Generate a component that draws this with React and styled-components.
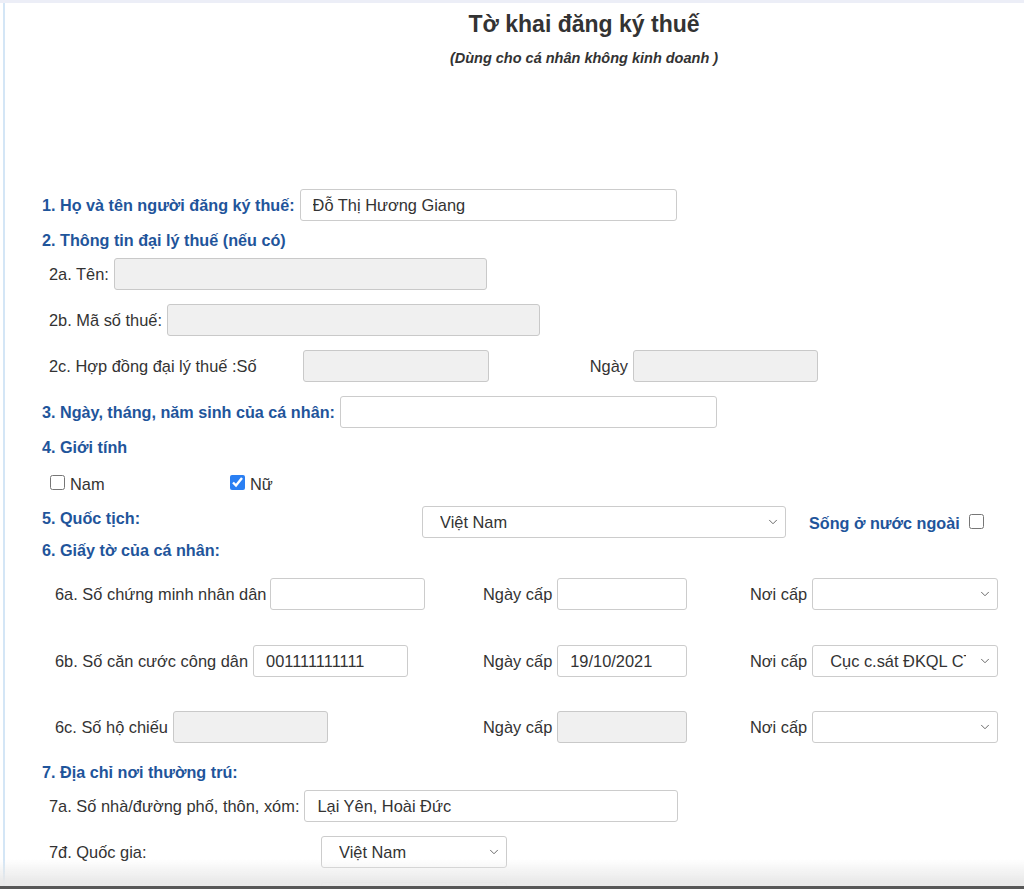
import styled, { createGlobalStyle } from "styled-components";
import { ChevronDown } from "lucide-react";

const GlobalStyle = createGlobalStyle`
  html, body { margin: 0; padding: 0; background: #fff; }
  body {
    font-family: "Liberation Sans", Arial, sans-serif;
    color: #333;
    overflow: hidden;
  }
  * { box-sizing: border-box; }
`;

const Page = styled.div`
  border-top: 3px solid #eceef7;
  height: 889px;
  overflow: hidden;
`;

const Frame = styled.div`
  margin-left: 3px;
  border-left: 2px solid #d4e6f6;
  min-height: 960px;
`;

const Header = styled.div`
  padding: 6px 0 0 139px;
  text-align: center;
`;

const Title = styled.h1`
  margin: 0;
  font-size: 23px;
  line-height: 30px;
  font-weight: 700;
  color: #333;
`;

const Subtitle = styled.div`
  margin-top: 10px;
  font-size: 14.5px;
  line-height: 18px;
  font-weight: 700;
  font-style: italic;
  color: #333;
`;

const Form = styled.form`
  padding: 122px 0 0 37px;
`;

const Heading = styled.div`
  margin-top: ${(p) => p.$mt || 0}px;
  font-size: 16.2px;
  line-height: 20px;
  font-weight: 700;
  color: #1f559b;
`;

const Row = styled.div`
  display: flex;
  align-items: ${(p) => (p.$top ? "flex-start" : "center")};
  gap: ${(p) => (p.$gap ?? 5)}px;
  margin-top: ${(p) => p.$mt || 0}px;
  padding-left: ${(p) => p.$indent || 0}px;
  height: 32px;
`;

const Label = styled.label`
  flex: none;
  width: ${(p) => (p.$w ? `${p.$w}px` : "auto")};
  font-size: ${(p) => (p.$bold ? 16.2 : 16.4)}px;
  line-height: 24px;
  font-weight: ${(p) => (p.$bold ? 700 : 400)};
  color: ${(p) => (p.$bold ? "#1f559b" : "#333")};
  text-align: ${(p) => (p.$right ? "right" : "left")};
  margin-left: ${(p) => p.$ml || 0}px;
  white-space: nowrap;
`;

const Input = styled.input`
  flex: none;
  width: ${(p) => p.$w}px;
  height: 32px;
  padding: 0 12px;
  margin-left: ${(p) => p.$ml || 0}px;
  border: 1px solid #ccc;
  border-radius: 3px;
  background: #fff;
  font-family: inherit;
  font-size: 16.4px;
  color: #333;
  outline: none;
  &:disabled {
    background: #f0f0f0;
    border-color: #c9c9c9;
  }
`;

const SelectWrap = styled.div`
  position: relative;
  flex: none;
  width: ${(p) => p.$w}px;
  height: 32px;
  margin-left: ${(p) => p.$ml || 0}px;
`;

const SelectBox = styled.select`
  appearance: none;
  width: 100%;
  height: 100%;
  padding: 0 31px 0 17px;
  border: 1px solid #ccc;
  border-radius: 3px;
  background: #fff;
  font-family: inherit;
  font-size: 16.4px;
  color: #333;
  outline: none;
`;

const Chevron = styled(ChevronDown)`
  position: absolute;
  right: 6px;
  top: 50%;
  transform: translateY(-50%);
  color: #555;
  pointer-events: none;
`;

const CheckRow = styled.div`
  display: grid;
  grid-template-columns: 180px 180px;
  align-items: center;
  height: 22px;
  margin-top: 13px;
  padding-left: 8px;
`;

const CheckItem = styled.label`
  display: flex;
  align-items: center;
  gap: 5px;
  font-size: 16.4px;
  color: #333;
  padding-top: 5px;
`;

const Box = styled.input.attrs({ type: "checkbox" })`
  flex: none;
  width: 15px;
  height: 15px;
  margin: -4px 0 0 0;
  accent-color: #2a7ff3;
`;

const Abroad = styled.div`
  display: flex;
  align-items: center;
  gap: 9px;
  height: 32px;
  margin-left: 23px;
  padding-top: 2px;
`;

const DocRow = styled.div`
  display: grid;
  grid-template-columns: 428px 267px 1fr;
  align-items: center;
  margin-top: ${(p) => p.$mt || 0}px;
  padding-left: 13px;
  height: 32px;
`;

const Cell = styled.div`
  display: flex;
  align-items: center;
  gap: ${(p) => p.$gap ?? 5}px;
`;

const Overlay = styled.div`
  position: fixed;
  left: 0;
  right: 0;
  bottom: 0;
  height: 30px;
  background: linear-gradient(
    to bottom,
    rgba(255, 255, 255, 0),
    rgba(232, 232, 232, 0.95) 85%
  );
  border-bottom: 3px solid #575757;
`;

const Select = ({ w, ml, value, options = [] }) => (
  <SelectWrap $w={w} $ml={ml}>
    <SelectBox defaultValue={value}>
      {options.map((o) => (
        <option key={o}>{o}</option>
      ))}
    </SelectBox>
    <Chevron size={14} strokeWidth={1.5} />
  </SelectWrap>
);

const docs = [
  { label: "6a. Số chứng minh nhân dân", gap: 4, no: "", date: "", place: "", mt: 18 },
  { label: "6b. Số căn cước công dân", gap: 5, no: "001111111111", date: "19/10/2021", place: "Cục c.sát ĐKQL CT về TTXH", mt: 35 },
  { label: "6c. Số hộ chiếu", gap: 5, no: "", date: "", place: "", mt: 34, disabled: true },
];

export default function App() {
  return (
    <>
      <GlobalStyle />
      <Page>
        <Frame>
          <Header>
            <Title>Tờ khai đăng ký thuế</Title>
            <Subtitle>(Dùng cho cá nhân không kinh doanh )</Subtitle>
          </Header>

          <Form onSubmit={(e) => e.preventDefault()}>
            <Row>
              <Label $bold>1. Họ và tên người đăng ký thuế:</Label>
              <Input $w={377} defaultValue="Đỗ Thị Hương Giang" />
            </Row>

            <Heading $mt={9}>2. Thông tin đại lý thuế (nếu có)</Heading>
            <Row $mt={8} $indent={7}>
              <Label>2a. Tên:</Label>
              <Input $w={373} disabled />
            </Row>
            <Row $mt={14} $indent={7}>
              <Label>2b. Mã số thuế:</Label>
              <Input $w={373} disabled />
            </Row>
            <Row $mt={14} $indent={7} $gap={0}>
              <Label $w={254}>2c. Hợp đồng đại lý thuế :Số</Label>
              <Input $w={186} disabled />
              <Label $w={139} $right>Ngày</Label>
              <Input $w={185} $ml={5} disabled />
            </Row>

            <Row $mt={14}>
              <Label $bold>3. Ngày, tháng, năm sinh của cá nhân:</Label>
              <Input $w={377} />
            </Row>

            <Heading $mt={9}>4. Giới tính</Heading>
            <CheckRow>
              <CheckItem>
                <Box />
                Nam
              </CheckItem>
              <CheckItem>
                <Box defaultChecked />
                Nữ
              </CheckItem>
            </CheckRow>

            <Row $mt={14} $top $gap={0}>
              <Label $bold $w={380}>5. Quốc tịch:</Label>
              <Select w={364} value="Việt Nam" options={["Việt Nam"]} />
              <Abroad>
                <Label $bold>Sống ở nước ngoài</Label>
                <Box />
              </Abroad>
            </Row>

            <Heading $mt={2}>6. Giấy tờ của cá nhân:</Heading>
            {docs.map((d) => (
              <DocRow key={d.label} $mt={d.mt}>
                <Cell $gap={d.gap}>
                  <Label>{d.label}</Label>
                  <Input $w={155} defaultValue={d.no} disabled={d.disabled} />
                </Cell>
                <Cell>
                  <Label>Ngày cấp</Label>
                  <Input $w={130} defaultValue={d.date} disabled={d.disabled} />
                </Cell>
                <Cell>
                  <Label>Nơi cấp</Label>
                  <Select w={186} value={d.place} options={["", "Cục c.sát ĐKQL CT về TTXH"]} />
                </Cell>
              </DocRow>
            ))}

            <Heading $mt={19}>7. Địa chỉ nơi thường trú:</Heading>
            <Row $mt={8} $indent={7}>
              <Label>7a. Số nhà/đường phố, thôn, xóm:</Label>
              <Input $w={374} defaultValue="Lại Yên, Hoài Đức" />
            </Row>
            <Row $mt={14} $indent={7} $gap={0}>
              <Label $w={272}>7đ. Quốc gia:</Label>
              <Select w={186} value="Việt Nam" options={["Việt Nam"]} />
            </Row>
            <Row $mt={14} $indent={7} $gap={0}>
              <Label $w={272}>7e. Tỉnh/Thành phố:</Label>
              <Select w={186} value="" options={[""]} />
            </Row>
          </Form>
        </Frame>
      </Page>
      <Overlay />
    </>
  );
}
